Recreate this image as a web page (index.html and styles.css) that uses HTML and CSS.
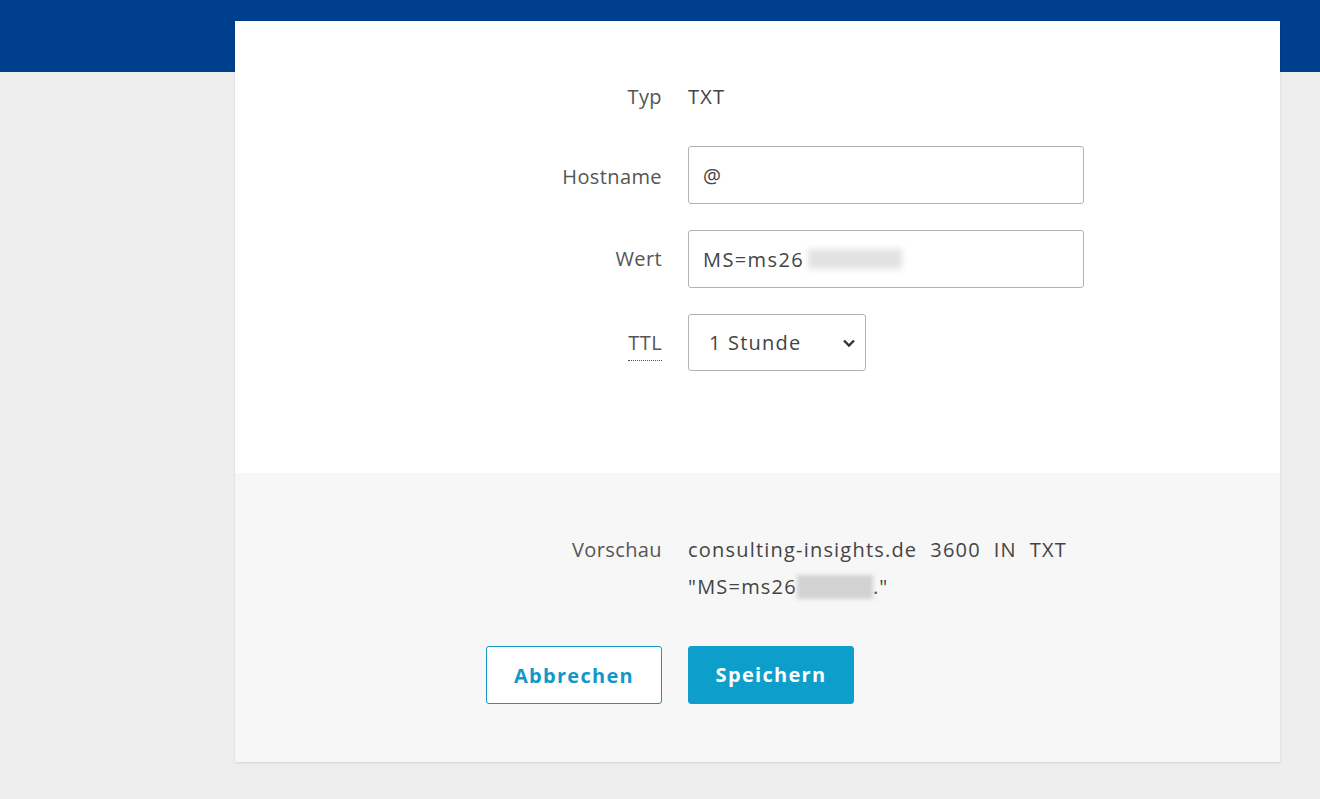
FILE: index.html
```html
<!DOCTYPE html>
<html lang="de">
<head>
<meta charset="utf-8">
<title>DNS-Eintrag bearbeiten</title>
<link rel="stylesheet" href="styles.css">
</head>
<body>
<div class="topbar"></div>
<main class="card">
  <section class="form">
    <div class="label">Typ</div>
    <div class="value typ">TXT</div>

    <label class="label host-label" for="host">Hostname</label>
    <div class="value"><input id="host" class="field" type="text" value="@"></div>

    <label class="label" for="wert">Wert</label>
    <div class="value">
      <div class="field-wrap">
        <input id="wert" class="field" type="text" value="MS=ms26">
        <span class="blur blur-input"></span>
      </div>
    </div>

    <label class="label" for="ttl"><abbr class="ttl" title="Time to live">TTL</abbr></label>
    <div class="value">
      <div class="select-wrap">
        <select id="ttl" class="select">
          <option>1 Stunde</option>
        </select>
        <svg class="chevron" width="14" height="10" viewBox="0 0 14 10"><path d="M2 2.5 L7 7.5 L12 2.5" fill="none" stroke="#333" stroke-width="2.4"/></svg>
      </div>
    </div>
  </section>
  <section class="preview">
    <div class="label">Vorschau</div>
    <div class="value preview-text"><span class="tok">consulting-insights.de</span><span class="tok">3600</span><span class="tok">IN</span><span class="tok">TXT</span> <span class="tok">"MS=ms26<span class="blur blur-prev"></span>."</span></div>

    <div class="label btn-cell"><button class="btn btn-outline" type="button">Abbrechen</button></div>
    <div class="value"><button class="btn btn-primary" type="button">Speichern</button></div>
  </section>
</main>
</body>
</html>
```
FILE: styles.css
```css
* { box-sizing: border-box; }
html, body { margin: 0; padding: 0; }
body {
  background: #eeeeee;
  font-family: "Open Sans", "Liberation Sans", sans-serif;
  font-size: 20px;
  color: #444;
  height: 799px;
  overflow: hidden;
}
.topbar {
  height: 72px;
  background: #003e8e;
}
.card {
  margin: -51px 40px 0 235px;
  width: 1045px;
  background: #fff;
  box-shadow: 0 1px 2px rgba(0,0,0,0.12);
}
.form, .preview {
  display: grid;
  grid-template-columns: 427px 1fr;
  column-gap: 26px;
  align-items: center;
}
.form {
  padding: 53px 0 102px;
  row-gap: 26px;
}
.preview {
  background: #f7f7f7;
  padding: 58px 0 58px;
  row-gap: 41px;
  align-items: start;
}
.label {
  text-align: right;
  color: #555;
  line-height: 28px;
  letter-spacing: 0.4px;
}
.host-label { padding-top: 3px; }
.value {
  line-height: 28px;
  letter-spacing: 1.2px;
}
.typ {
  height: 46px;
  display: flex;
  align-items: center;
  color: #444;
}
.form .label:first-child {
  height: 46px;
  display: flex;
  align-items: center;
  justify-content: flex-end;
}
.field {
  display: block;
  width: 396px;
  height: 58px;
  border: 1px solid #b3b3b3;
  border-radius: 3px;
  padding: 0 14px;
  font: inherit;
  letter-spacing: 1.4px;
  color: #444;
  background: #fff;
  outline: none;
}
.field-wrap {
  position: relative;
  width: 396px;
}
.blur {
  display: inline-block;
  background: #d6d6d6;
  filter: blur(3px);
  vertical-align: middle;
}
.blur-input {
  position: absolute;
  left: 120px;
  top: 19px;
  width: 94px;
  height: 20px;
  background: #e2e2e2;
}
.select-wrap {
  position: relative;
  width: 178px;
}
.select {
  display: block;
  width: 178px;
  height: 57px;
  border: 1px solid #b3b3b3;
  border-radius: 3px;
  padding: 0 20px;
  font: inherit;
  letter-spacing: 1.2px;
  color: #444;
  background: #fff;
  appearance: none;
  -webkit-appearance: none;
  outline: none;
}
.chevron {
  position: absolute;
  right: 10px;
  top: 24px;
  pointer-events: none;
}
.ttl {
  text-decoration: none;
  border-bottom: 1px dotted #555;
  padding-bottom: 4px;
}
.preview .label,
.preview-text {
  line-height: 37px;
}
.preview-text {
  max-width: 396px;
  color: #444;
}
.tok { margin-right: 13px; }
.preview-text .tok:nth-child(4) { margin-right: 0; }
.blur-prev {
  width: 76px;
  height: 24px;
  background: #d2d2d2;
  filter: blur(2px);
  margin-top: -4px;
}
.btn-cell {
  display: flex;
  justify-content: flex-end;
}
.btn {
  height: 58px;
  border-radius: 3px;
  font: inherit;
  font-weight: 700;
  font-size: 20px;
  letter-spacing: 1.3px;
  cursor: pointer;
}
.btn-outline {
  width: 176px;
  background: #fff;
  border: 1px solid #1198c8;
  color: #1198c8;
}
.btn-primary {
  width: 166px;
  background: #0e9ecb;
  border: 1px solid #0e9ecb;
  color: #fff;
}
```
